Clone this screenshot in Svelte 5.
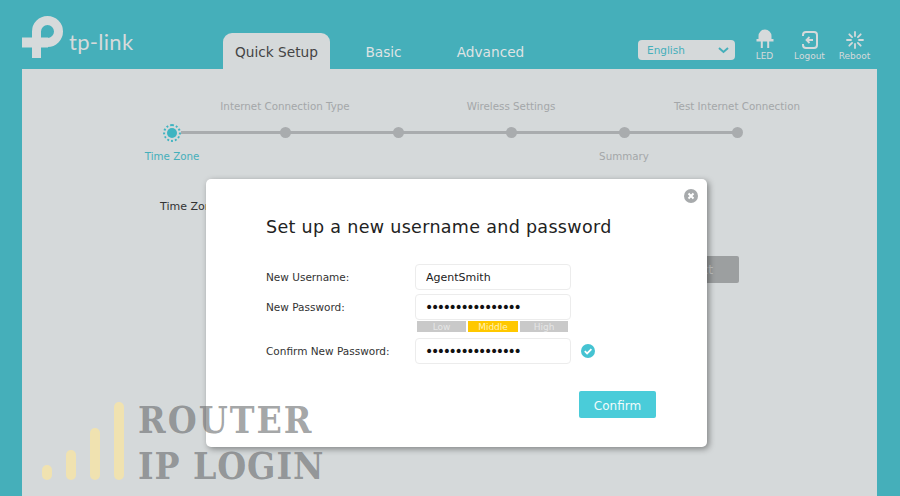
<script>
  const steps = [
    { top: '', bottom: 'Time Zone', active: true },
    { top: 'Internet Connection Type', bottom: '' },
    { top: '', bottom: '' },
    { top: 'Wireless Settings', bottom: '' },
    { top: '', bottom: 'Summary' },
    { top: 'Test Internet Connection', bottom: '', last: true }
  ];
</script>

<div class="page">
  <header class="header">
    <div class="brand">
      <svg class="logo" width="42" height="44" viewBox="22 16 42 44" fill="none" stroke="#d6dadb" stroke-width="9">
        <path d="M36.500 59V32.500A11 11 0 1 1 47.500 43.500"/>
        <path d="M22 43.500H48" stroke-width="10"/>
      </svg>
      <span class="wordmark">tp-link</span>
    </div>
    <nav class="tabs">
      <span class="tab active">Quick Setup</span>
      <span class="tab">Basic</span>
      <span class="tab">Advanced</span>
    </nav>
    <div class="select">
      <span>English</span>
      <svg width="11" height="7" viewBox="0 0 11 7" fill="none" stroke="#45afba" stroke-width="2"><path d="M1 1l4.500 4L10 1"/></svg>
    </div>
    <div class="tools">
      <div class="tool">
        <svg width="18" height="22" viewBox="0 0 18 22" fill="#d6dadb">
          <path d="M2.500 11V8a6.500 6.500 0 0 1 13 0v3h2v2.500H.5V11z"/>
          <rect x="4.800" y="13" width="2" height="7"/>
          <rect x="11.200" y="13" width="2" height="7"/>
        </svg>
        <span>LED</span>
      </div>
      <div class="tool">
        <svg width="18" height="20" viewBox="0 0 18 20" fill="none" stroke="#d6dadb" stroke-width="2">
          <path d="M2 6V5a3 3 0 0 1 3-3h8a3 3 0 0 1 3 3v10a3 3 0 0 1-3 3H5a3 3 0 0 1-3-3v-1"/>
          <path d="M12 10H6M8.500 7l-3 3 3 3" stroke-width="1.800"/>
        </svg>
        <span>Logout</span>
      </div>
      <div class="tool">
        <svg width="20" height="20" viewBox="0 0 20 20" fill="none" stroke="#d6dadb" stroke-width="1.800" stroke-linecap="round">
          <path d="M10 2v4M10 14v4M2 10h4M14 10h4M4.300 4.300l2.800 2.800M12.900 12.900l2.800 2.800M4.300 15.700l2.800-2.800M12.900 7.100l2.800-2.800"/>
        </svg>
        <span>Reboot</span>
      </div>
    </div>
  </header>

  <main class="main">
    <ol class="stepper">
      {#each steps as step}
        <li class="step" class:active={step.active} class:last={step.last}>
          <span class="step-top">{step.top}</span>
          <span class="dot"></span>
          <span class="step-bottom">{step.bottom}</span>
        </li>
      {/each}
    </ol>
    <div class="zone">Time Zone:</div>
    <div class="actions"><button class="next">Next</button></div>
  </main>

  <div class="watermark">
    <svg width="86" height="80" viewBox="0 0 86 80" fill="#f0e2b0">
      <rect x="0" y="65" width="10" height="15" rx="5"/>
      <rect x="24" y="50" width="10" height="30" rx="5"/>
      <rect x="48" y="28" width="10" height="52" rx="5"/>
      <rect x="72" y="2" width="10" height="78" rx="5"/>
    </svg>
    <div class="wm-text">
      <span class="wm-one">ROUTER</span>
      <span class="wm-two">IP LOGIN</span>
    </div>
  </div>

  <section class="modal">
    <button class="close" aria-label="Close">
      <svg width="14" height="14" viewBox="0 0 14 14"><circle cx="7" cy="7" r="7" fill="#a7aaac"/><path d="M4.500 4.500l5 5M9.500 4.500l-5 5" stroke="#fff" stroke-width="2"/></svg>
    </button>
    <h1>Set up a new username and password</h1>
    <div class="form">
      <div class="row">
        <label for="u">New Username:</label>
        <input id="u" value="AgentSmith" />
      </div>
      <div class="row">
        <label for="p">New Password:</label>
        <input id="p" class="secret" type="password" value="aaaaaaaaaaaaaaaa" />
      </div>
      <div class="strength">
        <span>Low</span><span class="mid">Middle</span><span class="high">High</span>
      </div>
      <div class="row">
        <label for="c">Confirm New Password:</label>
        <input id="c" class="secret" type="password" value="aaaaaaaaaaaaaaaa" />
        <svg class="ok" width="14" height="14" viewBox="0 0 14 14"><circle cx="7" cy="7" r="7" fill="#45c3d2"/><path d="M3.800 7.200l2.300 2.200 4.300-4.200" fill="none" stroke="#fff" stroke-width="1.800"/></svg>
      </div>
    </div>
    <div class="foot"><button class="confirm">Confirm</button></div>
  </section>
</div>

<style>
  :global(body) {
    margin: 0;
    background: #45afba;
    font-family: "DejaVu Sans", Verdana, sans-serif;
  }
  .page {
    position: relative;
    width: 900px;
    height: 496px;
    overflow: hidden;
    background: #45afba;
  }
  .header {
    display: flex;
    align-items: flex-end;
    height: 69px;
    padding-left: 22px;
    box-sizing: border-box;
  }
  .brand {
    display: flex;
    align-items: flex-end;
    gap: 5px;
    width: 201px;
    height: 43px;
    margin-bottom: 10px;
  }
  .logo { display: block; flex: none; }
  .wordmark {
    font-family: Lato, sans-serif;
    font-size: 22px;
    line-height: 28px;
    margin-bottom: 3px;
    letter-spacing: 0.3px;
    color: #d6dadb;
  }
  .tabs { display: flex; width: 415px; }
  .tab {
    width: 107px;
    height: 36px;
    line-height: 38px;
    text-align: center;
    font-size: 13.700px;
    color: #dfe3e4;
  }
  .tab.active {
    background: #d5d9da;
    color: #444;
    border-radius: 9px 9px 0 0;
  }
  .select {
    display: flex;
    align-items: center;
    justify-content: space-between;
    width: 97px;
    height: 20px;
    margin-bottom: 9px;
    padding: 0 6px 0 9px;
    box-sizing: border-box;
    background: #d5d9da;
    border-radius: 4px;
    color: #45afba;
    font-size: 10.500px;
  }
  .tools { display: flex; margin-left: 7px; margin-bottom: 8px; }
  .tool {
    display: flex;
    flex-direction: column;
    align-items: center;
    justify-content: flex-end;
    gap: 1px;
    width: 45px;
    color: #d6dadb;
    font-size: 9px;
  }
  .tool svg { display: block; }
  .main {
    margin: 0 23px 0 22px;
    height: 427px;
    background: #d5d9da;
    box-sizing: border-box;
    padding-top: 29px;
  }
  .stepper {
    display: flex;
    list-style: none;
    margin: 0 0 0 93.500px;
    padding: 0;
  }
  .step {
    position: relative;
    width: 113px;
    display: flex;
    flex-direction: column;
    align-items: center;
    color: #a4a7a9;
    font-size: 10.300px;
  }
  .step::after {
    content: "";
    position: absolute;
    left: 50%;
    top: 33px;
    width: 113px;
    height: 3px;
    background: #a9acae;
  }
  .step.active::after {
    left: calc(50% + 9px);
    width: 104px;
  }
  .step.last::after { display: none; }
  .step-top, .step-bottom {
    height: 16px;
    line-height: 16px;
    white-space: nowrap;
  }
  .dot {
    position: relative;
    z-index: 1;
    width: 11px;
    height: 11px;
    margin: 13px 0 10px;
    border-radius: 50%;
    background: #a9acae;
  }
  .step.active { color: #45afba; }
  .step.active .dot {
    width: 10px;
    height: 10px;
    margin: 13.500px 0 10.500px;
    background: #3fb4c1;
  }
  .step.active .dot::before {
    content: "";
    position: absolute;
    inset: -4px;
    border: 2px dotted #3fb4c1;
    border-radius: 50%;
  }
  .zone {
    margin: 36px 0 0 138px;
    font-size: 11px;
    line-height: 14px;
    color: #333;
  }
  .actions {
    display: flex;
    justify-content: flex-end;
    margin: 42px 138px 0 0;
  }
  .next {
    width: 80px;
    height: 27px;
    border: 0;
    border-radius: 2px;
    background: #9c9fa0;
    color: #c2c5c6;
    font: inherit;
    font-size: 12px;
  }
  .watermark {
    position: absolute;
    left: 42px;
    top: 400px;
    display: flex;
    gap: 10px;
    z-index: 3;
    pointer-events: none;
  }
  .watermark svg { display: block; flex: none; }
  .wm-text {
    display: flex;
    flex-direction: column;
    margin-top: -3px;
    font-family: "DejaVu Serif", serif;
    font-stretch: condensed;
    font-weight: 700;
    font-size: 37px;
    line-height: 46px;
    color: rgba(105, 107, 109, 0.62);
    white-space: nowrap;
  }
  .wm-one { letter-spacing: 2px; }
  .wm-two { letter-spacing: 0.9px; }
  .modal {
    position: absolute;
    left: 206px;
    top: 179px;
    z-index: 2;
    width: 501px;
    height: 268px;
    box-sizing: border-box;
    padding: 37px 51px 0 60px;
    background: #fff;
    border-radius: 5px;
    box-shadow: 2px 2px 6px rgba(0, 0, 0, 0.4);
  }
  .close {
    position: absolute;
    right: 9px;
    top: 10px;
    padding: 0;
    border: 0;
    background: none;
    line-height: 0;
  }
  h1 {
    margin: 0 0 26px;
    font-size: 17.500px;
    font-weight: 400;
    line-height: 22px;
    letter-spacing: 0.32px;
    color: #222;
  }
  .form { display: flex; flex-direction: column; }
  .row {
    display: flex;
    align-items: center;
    height: 26px;
    margin-bottom: 4px;
  }
  .row label {
    width: 149px;
    flex: none;
    font-size: 10.500px;
    color: #333;
    white-space: nowrap;
  }
  .row input {
    width: 156px;
    height: 26px;
    box-sizing: border-box;
    padding: 0 10px;
    border: 1px solid #ececec;
    border-radius: 4px;
    outline: 0;
    background: #fff;
    font-family: inherit;
    font-size: 11px;
    color: #222;
  }
  .row input.secret {
    padding-left: 9px;
    font-size: 14px;
    letter-spacing: -2.360px;
    color: #111;
  }
  .ok { margin-left: 10px; }
  .strength {
    display: flex;
    gap: 2px;
    height: 11px;
    margin: -3px 0 6px 151px;
    font-size: 9px;
    line-height: 12px;
    text-align: center;
    color: #e6e6e6;
  }
  .strength span { width: 49px; background: #c9c9c9; }
  .strength .mid { width: 50px; background: #ffc800; color: #fff2b8; }
  .strength .high { width: 48px; }
  .foot {
    display: flex;
    justify-content: flex-end;
    margin-top: 23px;
  }
  .confirm {
    width: 77px;
    height: 27px;
    padding: 2px 0 0;
    border: 0;
    border-radius: 2px;
    background: #4accd9;
    color: #f0fbfc;
    font-family: inherit;
    font-size: 12px;
  }
</style>
